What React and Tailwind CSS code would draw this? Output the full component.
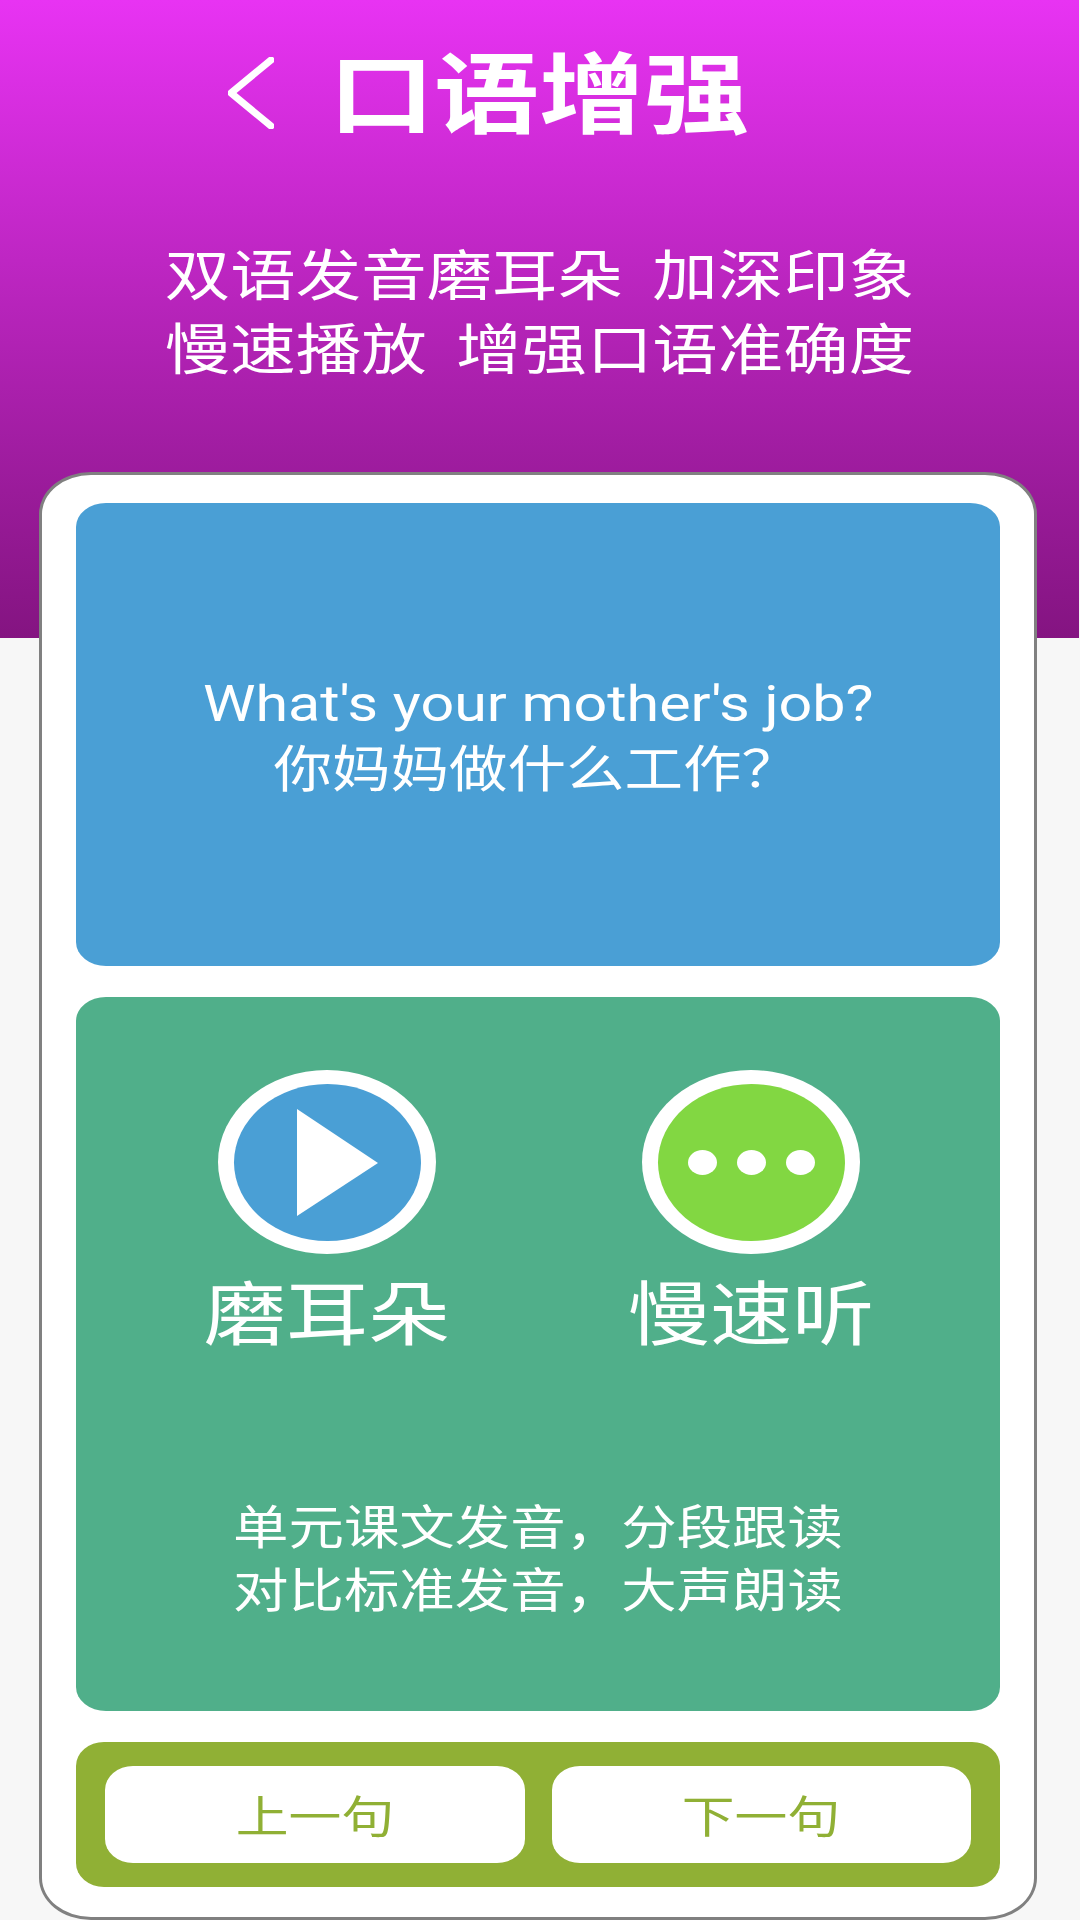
const cjk = "font-['Noto_Sans_CJK_SC','Noto_Sans',sans-serif]"

function Label({ children }) {
  return (
    <div className={`${cjk} text-[70px] leading-[80px] text-white text-center whitespace-nowrap scale-x-[1.174]`}>
      {children}
    </div>
  )
}

function RoundIcon({ fill, children }) {
  return (
    <div className="w-[218px] h-[184px] rounded-[50%] bg-white flex items-center justify-center">
      <div className={`w-[187px] h-[157px] rounded-[50%] flex items-center justify-center ${fill}`}>
        {children}
      </div>
    </div>
  )
}

function NavButton({ children }) {
  return (
    <div className={`${cjk} flex-1 h-[97px] rounded-[28px/24px] bg-white text-[#90b035] text-[44px] leading-[97px] text-center`}>
      <span className="inline-block scale-x-[1.2]">{children}</span>
    </div>
  )
}

export default function App() {
  return (
    <div className="w-[1080px] h-[1920px] overflow-hidden bg-[#f7f7f7]">
      <div className="w-[1079px] h-[638px] bg-gradient-to-b from-[#e833f3] to-[#841481]">
        <div className="flex items-center pl-[228px] pt-[50px]">
          <svg width="46" height="72" viewBox="0 0 46 72" fill="none" className="flex-shrink-0">
            <path d="M43 3 L3 36 L43 69" stroke="#fff" strokeWidth="7" strokeLinecap="round" strokeLinejoin="round" />
          </svg>
          <div className={`${cjk} ml-[55px] -mt-[10px] text-[88px] leading-[96px] font-bold text-white whitespace-nowrap origin-left scale-x-[1.193]`}>
            口语增强
          </div>
        </div>
        <div className={`${cjk} mt-[98px] text-[55px] leading-[74px] text-white text-center whitespace-pre scale-x-[1.19]`}>
          <div>双语发音磨耳朵  加深印象</div>
          <div>慢速播放  增强口语准确度</div>
        </div>
      </div>

      <div className="relative -mt-[166px] mx-[39px] w-[998px] h-[1448px] flex flex-col gap-[31px] px-[34px] pt-[28px] bg-white border-[3px] border-[#808080] rounded-[52px/42px]">
        <div className="h-[463px] flex flex-col items-center justify-center rounded-[30px/24px] bg-[#4a9fd5] text-white text-center">
          <div className="font-['Roboto',sans-serif] text-[50px] leading-[66px] whitespace-nowrap scale-x-[1.184]">
            What's your mother's job?
          </div>
          <div className={`${cjk} -mt-[5px] text-[50px] leading-[66px] pr-[2px] whitespace-nowrap scale-x-[1.17]`}>
            你妈妈做什么工作？
          </div>
        </div>

        <div className="h-[714px] rounded-[30px/24px] bg-[#50af8a] pt-[73px]">
          <div className="flex pl-[142px] gap-[206px]">
            <div className="flex flex-col items-center gap-[16px] w-[218px]">
              <RoundIcon fill="bg-[#4a9fd5]">
                <svg width="81" height="107" viewBox="0 0 81 107" className="ml-[21px]">
                  <path d="M0 0 L81 54 L0 107 Z" fill="#fff" />
                </svg>
              </RoundIcon>
              <Label>磨耳朵</Label>
            </div>
            <div className="flex flex-col items-center gap-[16px] w-[218px]">
              <RoundIcon fill="bg-[#82d742]">
                <div className="flex gap-[20px]">
                  <span className="w-[29px] h-[25px] rounded-[50%] bg-white" />
                  <span className="w-[29px] h-[25px] rounded-[50%] bg-white" />
                  <span className="w-[29px] h-[25px] rounded-[50%] bg-white" />
                </div>
              </RoundIcon>
              <Label>慢速听</Label>
            </div>
          </div>
          <div className={`${cjk} mt-[142px] text-[47px] leading-[63px] text-white text-center whitespace-nowrap scale-x-[1.18]`}>
            <div>单元课文发音，分段跟读</div>
            <div>对比标准发音，大声朗读</div>
          </div>
        </div>

        <div className="h-[145px] flex items-center gap-[27px] px-[29px] rounded-[28px/24px] bg-[#90b035]">
          <NavButton>上一句</NavButton>
          <NavButton>下一句</NavButton>
        </div>
      </div>
    </div>
  )
}
